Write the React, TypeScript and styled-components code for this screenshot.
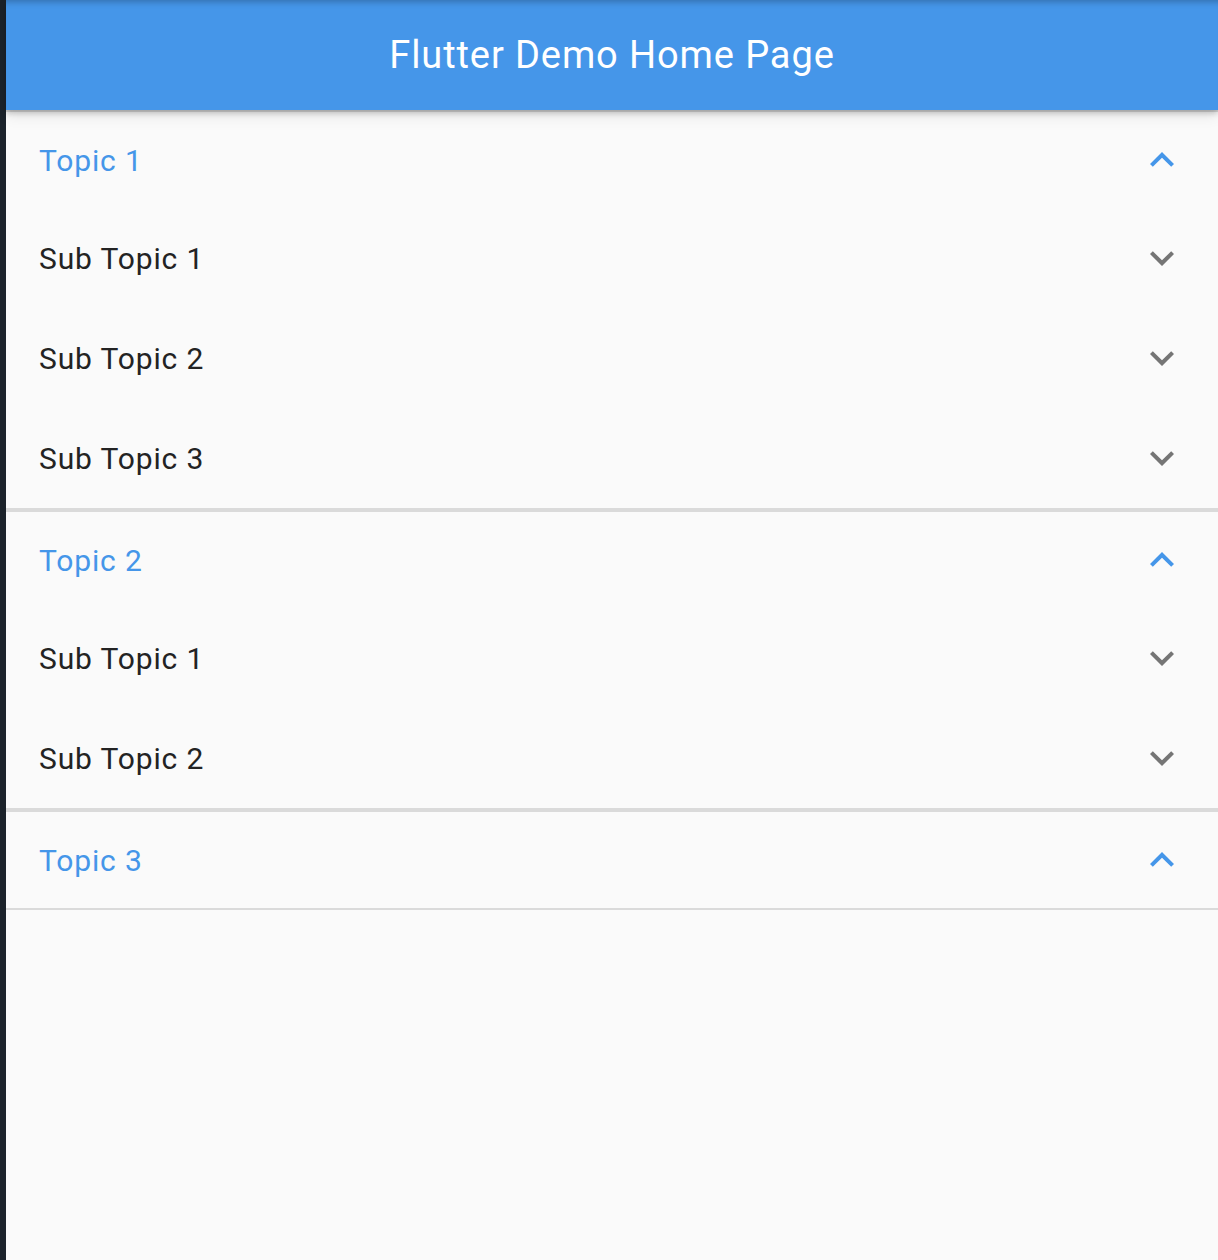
import React from "react";
import styled, { createGlobalStyle } from "styled-components";

const GlobalStyle = createGlobalStyle`
  html, body {
    margin: 0;
    padding: 0;
    background: #fafafa;
  }
  body {
    font-family: Roboto, "Noto Sans", "Liberation Sans", sans-serif;
  }
`;

const BLUE = "#4596e9";

const Frame = styled.div`
  display: flex;
  width: 1218px;
  height: 1260px;
  overflow: hidden;
`;

const SideStrip = styled.div`
  width: 6px;
  flex: none;
  background: #1c232b;
`;

const Screen = styled.div`
  flex: 1;
  display: flex;
  flex-direction: column;
  background: #fafafa;
  position: relative;
`;

const AppBar = styled.header`
  position: relative;
  z-index: 2;
  height: 110px;
  flex: none;
  background: ${BLUE};
  display: flex;
  align-items: center;
  justify-content: center;
  box-shadow: 0 3px 6px rgba(0, 0, 0, 0.22), 0 6px 14px rgba(0, 0, 0, 0.08),
    inset 0 8px 6px -6px rgba(0, 0, 0, 0.25);
`;

const Title = styled.h1`
  margin: 0;
  font-family: Roboto, sans-serif;
  font-weight: 400;
  font-size: 38px;
  color: #ffffff;
  letter-spacing: 0.9px;
`;

const List = styled.div`
  display: flex;
  flex-direction: column;
`;

const Section = styled.section<{ $expanded: boolean }>`
  display: flex;
  flex-direction: column;
  border-top: 2px solid ${(p) => (p.$expanded ? "#dadada" : "transparent")};
  border-bottom: 2px solid ${(p) => (p.$expanded ? "#dadada" : "transparent")};
`;

const Row = styled.div`
  height: 96px;
  display: flex;
  align-items: center;
  justify-content: space-between;
  padding: 0 32px 0 33px;
`;

const SubRow = styled.div`
  border-top: 2px solid transparent;
  border-bottom: 2px solid transparent;
`;

const Label = styled.span<{ $active?: boolean }>`
  font-family: Roboto, sans-serif;
  font-size: 30px;
  font-weight: 400;
  letter-spacing: 0.85px;
  color: ${(p) => (p.$active ? BLUE : "#232323")};
`;

const Chevron = ({ up, color }: { up?: boolean; color: string }) => (
  <svg width="48" height="48" viewBox="0 0 24 24" fill={color}>
    {up ? (
      <path d="M12 8l-6 6 1.41 1.41L12 10.83l4.59 4.58L18 14z" />
    ) : (
      <path d="M16.59 8.59L12 13.17 7.41 8.59 6 10l6 6 6-6z" />
    )}
  </svg>
);

const topics = [
  { title: "Topic 1", subs: ["Sub Topic 1", "Sub Topic 2", "Sub Topic 3"] },
  { title: "Topic 2", subs: ["Sub Topic 1", "Sub Topic 2"] },
  { title: "Topic 3", subs: [] as string[] },
];

export default function App() {
  return (
    <>
      <GlobalStyle />
      <Frame>
        <SideStrip />
        <Screen>
          <AppBar>
            <Title>Flutter Demo Home Page</Title>
          </AppBar>
          <List>
            {topics.map((t) => (
              <Section key={t.title} $expanded>
                <Row>
                  <Label $active>{t.title}</Label>
                  <Chevron up color={BLUE} />
                </Row>
                {t.subs.map((s) => (
                  <SubRow key={s}>
                    <Row>
                      <Label>{s}</Label>
                      <Chevron color="#757575" />
                    </Row>
                  </SubRow>
                ))}
              </Section>
            ))}
          </List>
        </Screen>
      </Frame>
    </>
  );
}
